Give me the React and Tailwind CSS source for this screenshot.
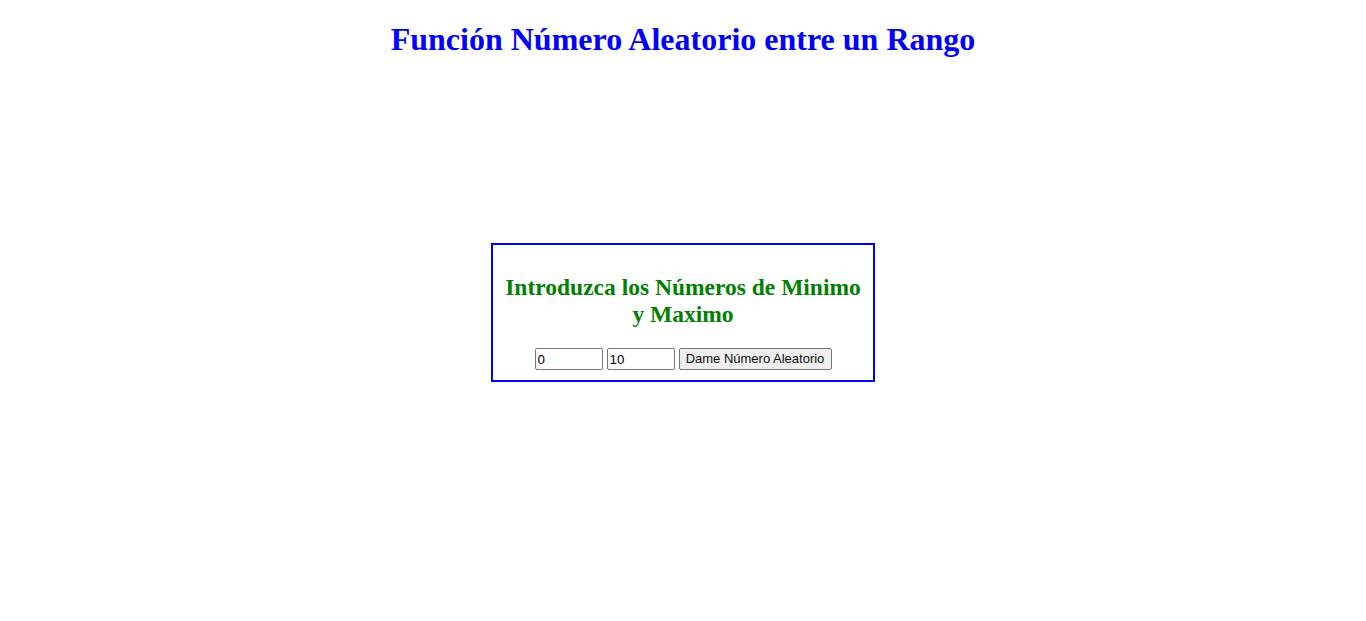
export default function App() {
  return (
    <div className="flex flex-col items-center min-h-[621px] bg-white" style={{ fontFamily: '"Liberation Serif", "Times New Roman", serif' }}>
      <h1 className="mt-[21px] mb-0 text-[32px] leading-[37px] font-bold text-[#0000ff] text-center">
        Función Número Aleatorio entre un Rango
      </h1>
      <div className="mt-[185px] w-[384px] border-2 border-[#0000ff] p-[10px] text-center">
        <h2 className="mt-[19px] mb-[20px] text-[23.5px] leading-[27px] font-bold text-[#008000]">
          Introduzca los Números de Minimo y Maximo
        </h2>
        <div className="flex justify-center items-center gap-[4px]" style={{ fontFamily: '"Liberation Sans", Arial, sans-serif' }}>
          <input
            type="text"
            defaultValue="0"
            className="w-[68px] h-[22px] border border-[#767676] rounded-[2px] px-[2px] text-[13.33px] text-black bg-white outline-none"
          />
          <input
            type="text"
            defaultValue="10"
            className="w-[68px] h-[22px] border border-[#767676] rounded-[2px] px-[2px] text-[13.33px] text-black bg-white outline-none"
          />
          <button className="w-[153px] h-[22px] border border-[#767676] rounded-[2px] bg-[#efefef] text-[13px] text-[#111] px-0 whitespace-nowrap">
            Dame Número Aleatorio
          </button>
        </div>
      </div>
    </div>
  );
}
